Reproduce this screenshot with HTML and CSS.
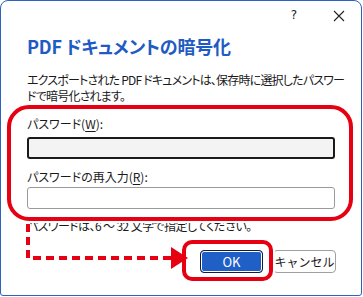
FILE: index.html
```html
<!DOCTYPE html>
<html lang="ja">
<head>
    <meta charset="UTF-8">
    <title>PDF ドキュメントの暗号化</title>
    <link rel="stylesheet" href="styles.css">
</head>
<body>
    <div class="dialog">
        <div class="titlebar">
            <span class="help">?</span>
            <svg class="close" width="12" height="12" viewBox="0 0 12 12">
                <path d="M1 1 L11 11 M11 1 L1 11" stroke="#222" stroke-width="1.1" fill="none"/>
            </svg>
        </div>
        <div class="content">
            <h1>PDF ドキュメントの暗号化</h1>
            <p class="notation">エクスポートされた PDF ドキュメントは、保存時に選択したパスワー<br>ドで暗号化されます。</p>
            <label class="label first">パスワード(<u>W</u>):</label>
            <input type="password" class="field active">
            <label class="label second">パスワードの再入力(<u>R</u>):</label>
            <input type="password" class="field">
            <p class="hint">パスワードは、6 ～ 32 文字で指定してください。</p>
            <div class="buttons">
                <button class="btn primary">OK</button>
                <button class="btn">キャンセル</button>
            </div>
        </div>

        <!-- annotations -->
        <div class="mark fields-mark"></div>
        <div class="mark ok-mark"></div>
        <svg class="arrow" width="200" height="60" viewBox="0 0 200 60">
            <path d="M27 2 V36 H172" stroke="#fff" stroke-width="7" fill="none"/>
            <path d="M27 2 V36 H172" stroke="#e60012" stroke-width="4" fill="none" stroke-dasharray="8 5"/>
            <polygon points="170,25 170,47 187,36" fill="#e60012"/>
        </svg>
    </div>
</body>
</html>
```

FILE: styles.css
```css
body {
    margin: 0;
    padding: 0;
    background-color: #fff;
    font-family: "Noto Sans CJK JP", "Noto Sans", sans-serif;
    font-feature-settings: "palt";
    color: #1a1a1a;
}
.dialog {
    position: relative;
    box-sizing: border-box;
    width: 362px;
    height: 296px;
    border: 1px solid #2a63c0;
    border-radius: 8px 8px 3px 3px;
    background: #fff;
}
.titlebar {
    height: 30px;
    display: flex;
    justify-content: flex-end;
    align-items: center;
    gap: 36px;
    padding-right: 16px;
}
.help {
    font-family: "DejaVu Sans", sans-serif;
    font-size: 12px;
    color: #222;
    margin-top: -2px;
}
.close {
    margin-top: -1px;
}
.content {
    padding: 0 25px 0 26px;
}
h1 {
    margin: 3px 0 0;
    font-size: 18px;
    line-height: 24px;
    font-weight: bold;
    color: #1f5bc4;
    letter-spacing: -0.2px;
}
.notation {
    margin: 14px 0 0;
    font-size: 12px;
    line-height: 16px;
    letter-spacing: -0.8px;
    white-space: nowrap;
}
.label {
    display: block;
    font-size: 12px;
    line-height: 16px;
}
.label.first {
    margin-top: 12px;
}
.label.second {
    margin-top: 10px;
}
.label u {
    text-decoration-thickness: 1px;
    text-underline-offset: 2px;
}
.field {
    display: block;
    box-sizing: border-box;
    width: 308px;
    height: 22px;
    margin-top: 5px;
    border: 1px solid #9a9a9a;
    border-radius: 3px;
    background: #fff;
}
.field.active {
    border: 2px solid #1a1a1a;
    background: #f3f3f3;
}
.label.second + .field {
    margin-top: 2px;
}
.hint {
    margin: 9px 0 0;
    font-size: 12px;
    line-height: 16px;
    letter-spacing: -0.6px;
}
.buttons {
    display: flex;
    justify-content: flex-end;
    gap: 10px;
    margin-top: 16px;
}
.btn {
    box-sizing: border-box;
    width: 63px;
    height: 23px;
    padding: 0;
    font-family: inherit;
    font-size: 12px;
    color: #1a1a1a;
    background: #fff;
    border: 1px solid #a0a0a0;
    border-radius: 4px;
}
.btn.primary {
    background: #1f5fc6;
    color: #fff;
    font-size: 13px;
    border: 1px solid #0e1e3c;
    box-shadow: inset 0 0 0 1px #fff;
}
.mark {
    position: absolute;
    box-sizing: border-box;
    border: 4px solid #e60012;
    box-shadow: 0 0 0 2px #fff;
}
.fields-mark {
    left: 6px;
    top: 104px;
    width: 346px;
    height: 116px;
    border-radius: 22px;
}
.ok-mark {
    left: 181px;
    top: 239px;
    width: 91px;
    height: 41px;
    border-radius: 10px;
}
.arrow {
    position: absolute;
    left: 0;
    top: 221px;
}
```
